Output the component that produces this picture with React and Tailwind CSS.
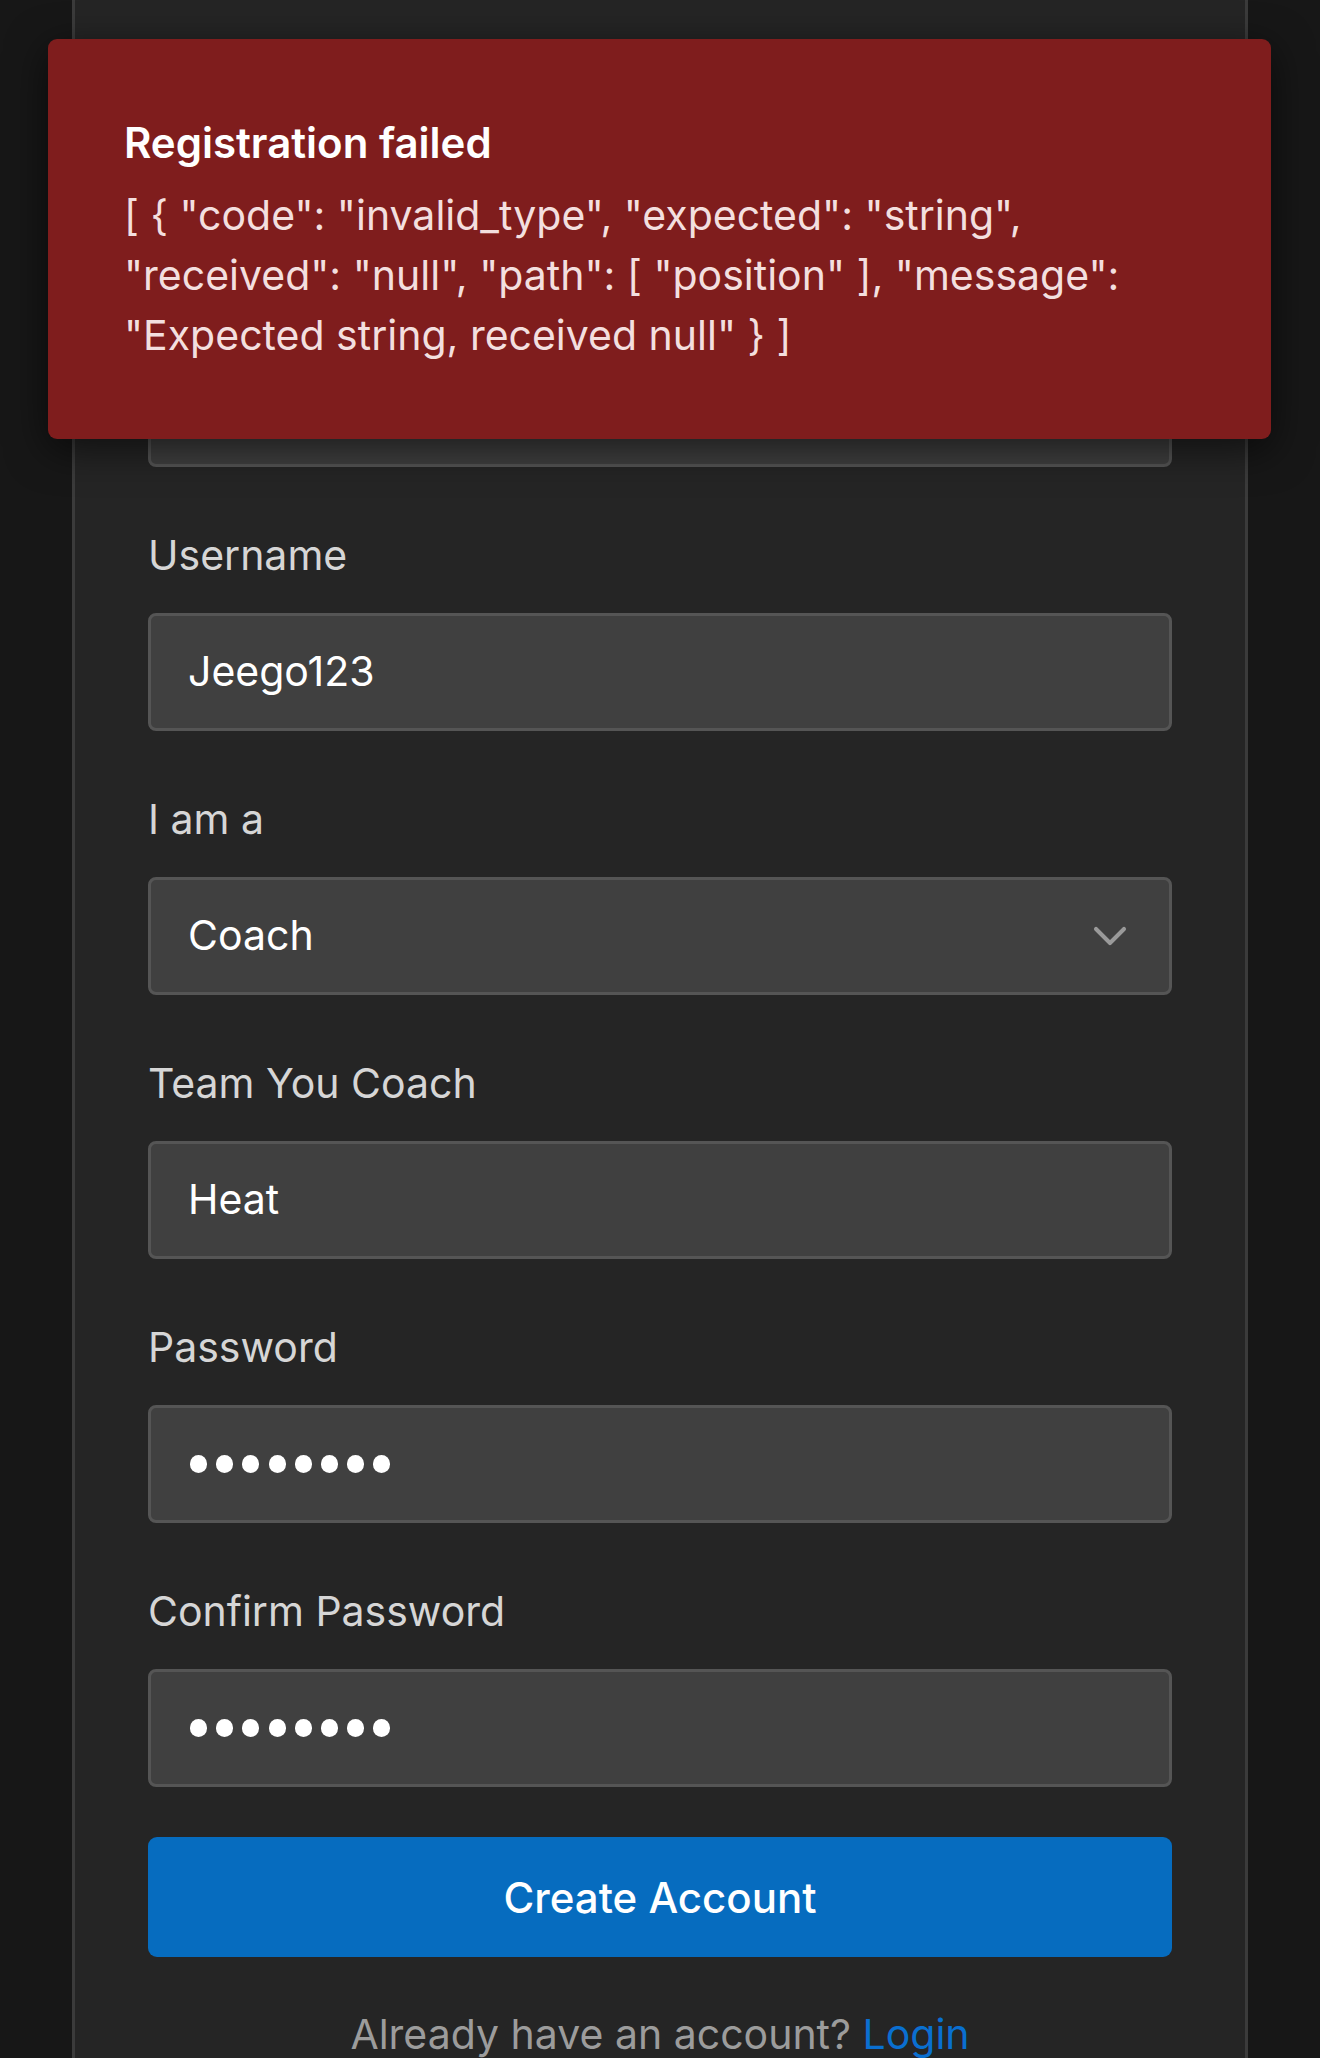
import { ChevronDown } from 'lucide-react';

const font = { fontFamily: 'Inter, "Noto Sans", sans-serif' };

function Field({ label, children }) {
  return (
    <div className="flex flex-col">
      <label className="text-[41px] leading-[51px] text-[#d6d6d6] mb-[32px]">{label}</label>
      {children}
    </div>
  );
}

function TextBox({ value }) {
  return (
    <div className="h-[118px] rounded-[8px] border-[3px] border-[#555555] bg-[#404040] flex items-center px-[37px]">
      <span className="text-[41px] text-white">{value}</span>
    </div>
  );
}

function PasswordBox({ length }) {
  return (
    <div className="h-[118px] rounded-[8px] border-[3px] border-[#555555] bg-[#404040] flex items-center gap-[9.2px] px-[39px]" aria-label="password">
      {Array.from({ length }).map((_, i) => (
        <span key={i} className="w-[17px] h-[18px] rounded-full bg-white" />
      ))}
    </div>
  );
}

export default function App() {
  return (
    <div className="relative w-[1320px] h-[2058px] overflow-hidden bg-[#171717]" style={font}>
      {/* form card, scrolled so its top is off screen */}
      <div className="ml-[72px] w-[1176px] min-h-[2058px] border-x-[3px] border-[#3b3b3b] bg-[#252525] px-[73px] pt-[266px]">
        <div className="flex flex-col gap-[63px]">
          <Field label="Email">
            <TextBox value="" />
          </Field>
          <Field label="Username">
            <TextBox value="Jeego123" />
          </Field>
          <Field label="I am a">
            <div className="h-[118px] rounded-[8px] border-[3px] border-[#555555] bg-[#404040] flex items-center justify-between pl-[37px] pr-[31px]">
              <span className="text-[41px] text-white">Coach</span>
              <ChevronDown size={56} strokeWidth={1.75} className="text-[#9a9a9a]" />
            </div>
          </Field>
          <Field label="Team You Coach">
            <TextBox value="Heat" />
          </Field>
          <Field label="Password">
            <PasswordBox length={8} />
          </Field>
          <Field label="Confirm Password">
            <PasswordBox length={8} />
          </Field>
        </div>

        <button className="mt-[50px] w-full h-[120px] rounded-[9px] bg-[#066cbf] text-white text-[42px] font-medium">
          Create Account
        </button>

        <p className="mt-[52px] text-center text-[41px] leading-[51px] text-[#9c9c9c]">
          Already have an account? <span className="text-[#0a6fd0]">Login</span>
        </p>
      </div>

      {/* error toast */}
      <div className="absolute left-[48px] top-[39px] w-[1223px] h-[400px] rounded-[9px] bg-[#7f1d1d] px-[76px] pt-[74px] shadow-[0_10px_40px_rgba(0,0,0,0.6)]">
        <div className="text-[42px] leading-[60px] font-semibold text-white">Registration failed</div>
        <div className="mt-[12px] text-[41px] leading-[60px] text-[#f3dfdf]">
          [ {'{'} "code": "invalid_type", "expected": "string", "received": "null", "path": [ "position" ], "message": "Expected string, received null" {'}'} ]
        </div>
      </div>
    </div>
  );
}
